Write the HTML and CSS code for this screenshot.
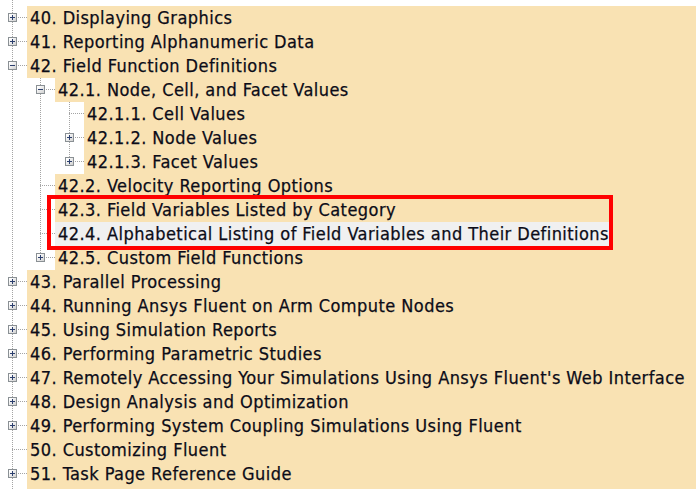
FILE: index.html
```html
<!DOCTYPE html>
<html lang="en">
<head>
<meta charset="utf-8">
<title>Fluent User's Guide - Contents</title>
<link rel="stylesheet" href="styles.css">
</head>
<body>
<div class="tree">
  <div class="row spacer"><span class="cell c1 pipe"></span></div>

  <div class="row"><span class="cell c1 tee"><svg class="box" width="9" height="9" viewBox="0 0 9 9"><rect x="0.5" y="0.5" width="8" height="8"/><path d="M2 4.5h5M4.5 2v5"/></svg></span><div class="label"><span class="text">40. Displaying Graphics</span></div></div>
  <div class="row"><span class="cell c1 tee"><svg class="box" width="9" height="9" viewBox="0 0 9 9"><rect x="0.5" y="0.5" width="8" height="8"/><path d="M2 4.5h5M4.5 2v5"/></svg></span><div class="label"><span class="text">41. Reporting Alphanumeric Data</span></div></div>
  <div class="row"><span class="cell c1 tee"><svg class="box" width="9" height="9" viewBox="0 0 9 9"><rect x="0.5" y="0.5" width="8" height="8"/><path d="M2 4.5h5"/></svg></span><div class="label"><span class="text">42. Field Function Definitions</span></div></div>

  <div class="row"><span class="cell c1 pipe"></span><span class="cell c2 tee"><svg class="box" width="9" height="9" viewBox="0 0 9 9"><rect x="0.5" y="0.5" width="8" height="8"/><path d="M2 4.5h5"/></svg></span><div class="label"><span class="text">42.1. Node, Cell, and Facet Values</span></div></div>
  <div class="row"><span class="cell c1 pipe"></span><span class="cell c2 pipe"></span><span class="cell c3 tee"></span><div class="label"><span class="text">42.1.1. Cell Values</span></div></div>
  <div class="row"><span class="cell c1 pipe"></span><span class="cell c2 pipe"></span><span class="cell c3 tee"><svg class="box" width="9" height="9" viewBox="0 0 9 9"><rect x="0.5" y="0.5" width="8" height="8"/><path d="M2 4.5h5M4.5 2v5"/></svg></span><div class="label"><span class="text">42.1.2. Node Values</span></div></div>
  <div class="row"><span class="cell c1 pipe"></span><span class="cell c2 pipe"></span><span class="cell c3 ell"><svg class="box" width="9" height="9" viewBox="0 0 9 9"><rect x="0.5" y="0.5" width="8" height="8"/><path d="M2 4.5h5M4.5 2v5"/></svg></span><div class="label"><span class="text">42.1.3. Facet Values</span></div></div>
  <div class="row"><span class="cell c1 pipe"></span><span class="cell c2 tee"></span><div class="label"><span class="text">42.2. Velocity Reporting Options</span></div></div>
  <div class="row"><span class="cell c1 pipe"></span><span class="cell c2 tee"></span><div class="label"><span class="text">42.3. Field Variables Listed by Category</span></div></div>
  <div class="row"><span class="cell c1 pipe"></span><span class="cell c2 tee"></span><div class="label"><span class="text selected">42.4. Alphabetical Listing of Field Variables and Their Definitions</span></div></div>
  <div class="row"><span class="cell c1 pipe"></span><span class="cell c2 ell"><svg class="box" width="9" height="9" viewBox="0 0 9 9"><rect x="0.5" y="0.5" width="8" height="8"/><path d="M2 4.5h5M4.5 2v5"/></svg></span><div class="label"><span class="text">42.5. Custom Field Functions</span></div></div>

  <div class="row"><span class="cell c1 tee"><svg class="box" width="9" height="9" viewBox="0 0 9 9"><rect x="0.5" y="0.5" width="8" height="8"/><path d="M2 4.5h5M4.5 2v5"/></svg></span><div class="label"><span class="text">43. Parallel Processing</span></div></div>
  <div class="row"><span class="cell c1 tee"><svg class="box" width="9" height="9" viewBox="0 0 9 9"><rect x="0.5" y="0.5" width="8" height="8"/><path d="M2 4.5h5M4.5 2v5"/></svg></span><div class="label"><span class="text">44. Running Ansys Fluent on Arm Compute Nodes</span></div></div>
  <div class="row"><span class="cell c1 tee"><svg class="box" width="9" height="9" viewBox="0 0 9 9"><rect x="0.5" y="0.5" width="8" height="8"/><path d="M2 4.5h5M4.5 2v5"/></svg></span><div class="label"><span class="text">45. Using Simulation Reports</span></div></div>
  <div class="row"><span class="cell c1 tee"><svg class="box" width="9" height="9" viewBox="0 0 9 9"><rect x="0.5" y="0.5" width="8" height="8"/><path d="M2 4.5h5M4.5 2v5"/></svg></span><div class="label"><span class="text">46. Performing Parametric Studies</span></div></div>
  <div class="row"><span class="cell c1 tee"><svg class="box" width="9" height="9" viewBox="0 0 9 9"><rect x="0.5" y="0.5" width="8" height="8"/><path d="M2 4.5h5M4.5 2v5"/></svg></span><div class="label"><span class="text">47. Remotely Accessing Your Simulations Using Ansys Fluent's Web Interface</span></div></div>
  <div class="row"><span class="cell c1 tee"><svg class="box" width="9" height="9" viewBox="0 0 9 9"><rect x="0.5" y="0.5" width="8" height="8"/><path d="M2 4.5h5M4.5 2v5"/></svg></span><div class="label"><span class="text">48. Design Analysis and Optimization</span></div></div>
  <div class="row"><span class="cell c1 tee"><svg class="box" width="9" height="9" viewBox="0 0 9 9"><rect x="0.5" y="0.5" width="8" height="8"/><path d="M2 4.5h5M4.5 2v5"/></svg></span><div class="label"><span class="text">49. Performing System Coupling Simulations Using Fluent</span></div></div>
  <div class="row"><span class="cell c1 tee"></span><div class="label"><span class="text">50. Customizing Fluent</span></div></div>
  <div class="row"><span class="cell c1 tee"><svg class="box" width="9" height="9" viewBox="0 0 9 9"><rect x="0.5" y="0.5" width="8" height="8"/><path d="M2 4.5h5M4.5 2v5"/></svg></span><div class="label"><span class="text">51. Task Page Reference Guide</span></div></div>
  <div class="row tail"><span class="cell c1 pipe"></span><div class="label"></div></div>

  <div class="callout"></div>
</div>
</body>
</html>
```

FILE: styles.css
```css
html, body {
  margin: 0;
  padding: 0;
  background: #ffffff;
}

.tree {
  position: relative;
  width: 696px;
  font-family: "DejaVu Sans Condensed", "DejaVu Sans", sans-serif;
  font-size: 18px;
  letter-spacing: 0.44px;
  color: #0c0c18;
  -webkit-text-stroke: 0.25px #0c0c18;
}

.row {
  display: flex;
  height: 24px;
}

.row.spacer {
  height: 6px;
}

.row.tail {
  height: 3px;
}

.cell {
  flex: none;
  height: 100%;
  display: flex;
  align-items: flex-start;
  --dotv: repeating-linear-gradient(to bottom, #a4a4a4 0 1px, transparent 1px 2px);
  --doth: repeating-linear-gradient(to right, #a4a4a4 0 1px, transparent 1px 2px);
  background-repeat: no-repeat;
}

.c1 { width: 27px; --x: 12px; }
.c2 { width: 28px; --x: 13px; }
.c3 { width: 29px; --x: 14px; }

.pipe {
  background-image: var(--dotv);
  background-size: 1px 100%;
  background-position: var(--x) 0;
}

.tee {
  background-image: var(--dotv), var(--doth);
  background-size: 1px 100%, 100% 1px;
  background-position: var(--x) 0, var(--x) 11px;
}

.ell {
  background-image: var(--dotv), var(--doth);
  background-size: 1px 12px, 100% 1px;
  background-position: var(--x) 0, var(--x) 11px;
}

.box {
  display: block;
  flex: none;
  margin-left: calc(var(--x) - 4px);
  margin-top: 7px;
  background: linear-gradient(135deg, #ffffff 20%, #c9c9c9 100%);
}

.box rect {
  fill: none;
  stroke: #8a9094;
}

.box path {
  fill: none;
  stroke: #2c3f6e;
  stroke-width: 1;
}

.label {
  flex: 1;
  height: 24px;
  line-height: 24px;
  background: #f9e2b3;
  white-space: nowrap;
}

.tail .label {
  height: 3px;
}

.text {
  display: inline-block;
  padding: 0 3px 0 3px;
}

.text.selected {
  background: #f0f0f0;
}

.callout {
  position: absolute;
  left: 47px;
  top: 195px;
  width: 566px;
  height: 55px;
  box-sizing: border-box;
  border: 4px solid #ff0000;
}
```
